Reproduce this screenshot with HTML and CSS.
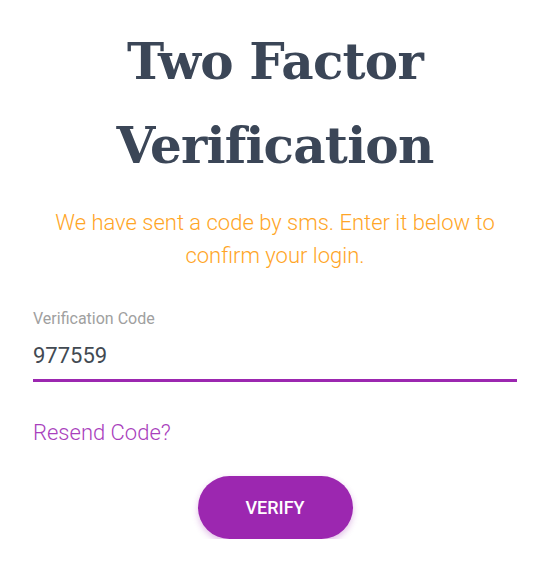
FILE: index.html
```html
<!DOCTYPE html>
<html lang="en">
<head>
<meta charset="utf-8">
<title>Two Factor Verification</title>
<link rel="stylesheet" href="styles.css">
</head>
<body>
<main class="card">
  <h1 class="title">Two Factor Verification</h1>
  <p class="subtitle">We have sent a code by sms. Enter it below to confirm your login.</p>
  <div class="field">
    <label class="field-label" for="code">Verification Code</label>
    <input class="field-input" id="code" type="text" value="977559">
  </div>
  <a class="resend" href="#">Resend Code?</a>
  <div class="actions">
    <button class="verify" type="button">VERIFY</button>
  </div>
</main>
</body>
</html>
```
FILE: styles.css
```css
* { box-sizing: border-box; }
html, body { margin: 0; padding: 0; background: #ffffff; }
body { font-family: Roboto, "Noto Sans", sans-serif; }
.card {
  padding: 20px 20px 0 33px;
  display: flex;
  flex-direction: column;
}
.title {
  margin: 0;
  font-family: "DejaVu Serif", "Liberation Serif", serif;
  font-weight: 700;
  font-size: 50px;
  letter-spacing: -0.8px;
  line-height: 84px;
  color: #3b4657;
  text-align: center;
}
.subtitle {
  margin: 18px 0 0;
  font-weight: 300;
  font-size: 22px;
  line-height: 33px;
  color: #ffa526;
  text-align: center;
}
.field {
  margin-top: 37px;
  display: flex;
  flex-direction: column;
}
.field-label {
  font-size: 16px;
  line-height: 20px;
  color: #a0a0a0;
}
.field-input {
  border: 0;
  border-bottom: 3px solid #9c27b0;
  padding: 12px 0 8px;
  font-family: Roboto, sans-serif;
  font-size: 22px;
  line-height: 30px;
  color: #424a52;
  outline: none;
  background: transparent;
}
.resend {
  margin-top: 36px;
  font-weight: 300;
  font-size: 22px;
  line-height: 30px;
  color: #a93fbd;
  text-decoration: none;
  align-self: flex-start;
}
.actions {
  margin-top: 28px;
  display: flex;
  justify-content: center;
}
.verify {
  width: 155px;
  height: 63px;
  border: 0;
  border-radius: 32px;
  background: #9c27b0;
  color: #ffffff;
  font-family: Roboto, sans-serif;
  font-weight: 500;
  font-size: 18px;
  box-shadow: 0 3px 6px rgba(156, 39, 176, 0.3);
  cursor: pointer;
}
```
